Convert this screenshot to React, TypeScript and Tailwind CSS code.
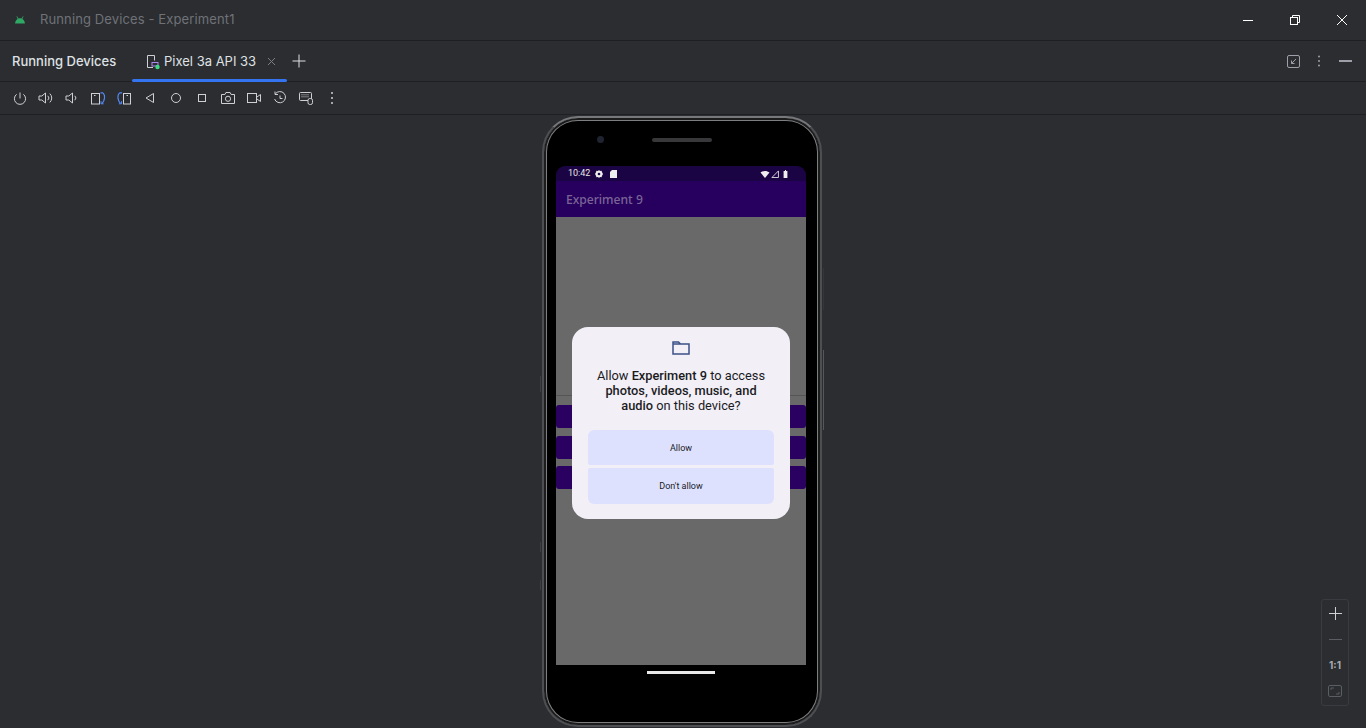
import React from "react";

const S = ({ children, w = 16, h = 16, c = "#ced0d6", vb }: { children: React.ReactNode; w?: number; h?: number; c?: string; vb?: string }) => (
  <svg width={w} height={h} viewBox={vb ?? `0 0 ${w} ${h}`} fill="none" stroke={c} strokeWidth="1" className="shrink-0">
    {children}
  </svg>
);

const Tool = ({ children, w = 26 }: { children: React.ReactNode; w?: number }) => (
  <div className="flex h-full shrink-0 items-center justify-center" style={{ width: w }}>
    {children}
  </div>
);

const toolIcons: React.ReactNode[] = [
  <S><path d="M8 2.5v6" /><path d="M4.6 4.3a5.6 5.6 0 1 0 6.8 0" /></S>,
  <S><path d="M1 6h2.8L7.5 3v10L3.8 10H1z" /><path d="M9.8 5.8a3 3 0 0 1 0 4.4" /><path d="M11.8 3.6a6 6 0 0 1 0 8.8" /></S>,
  <S><path d="M2 6h2.8L8.5 3v10L4.8 10H2z" /><path d="M10.8 5.8a3 3 0 0 1 0 4.4" /></S>,
  <S><rect x="1.5" y="3.5" width="8" height="10.5" /><path d="M4 5.5h1.5" /><path d="M10.5 2.8h2.5M13 2.8c2.5 2.5 2 7.5-1 10.7" stroke="#548af7" strokeWidth="1.2" /><path d="M11 11.2v2.6h2.6" stroke="#548af7" /></S>,
  <S><rect x="7.5" y="3.5" width="7" height="10.5" /><path d="M10.5 5.5h1.5" /><path d="M6 2.8H3.5M3.5 2.8c-2.5 2.5-2 7.5 1 10.7" stroke="#548af7" strokeWidth="1.2" /><path d="M5.5 11.2v2.6H2.9" stroke="#548af7" /></S>,
  <S><path d="M11.5 3.5v9L4 8z" /></S>,
  <S><circle cx="8" cy="8" r="4.5" /></S>,
  <S><rect x="4.5" y="4.5" width="7" height="7" /></S>,
  <S><path d="M1.5 4.5h3.4l1-2h4.2l1 2h3.4v9h-13z" /><circle cx="8" cy="8.8" r="2.6" /></S>,
  <S><rect x="1.5" y="3.5" width="9" height="9" /><path d="M10.5 7.3l4-2.8v7l-4-2.8" /></S>,
  <S><path d="M3.4 3.8A5.6 5.6 0 1 1 2.6 9" /><path d="M3 1.5v3h3" /><path d="M8 5.5V8.5h2.5" /></S>,
  <S><rect x="1.5" y="2.5" width="12" height="8" rx="1" /><path d="M3.5 4.8h8M3.5 6.8h8" strokeDasharray="1 1" /><rect x="10" y="8.5" width="4.5" height="6" rx="1.8" fill="#2b2d30" /></S>,
  <S><circle cx="8" cy="3" r="1" fill="#ced0d6" stroke="none" /><circle cx="8" cy="8" r="1" fill="#ced0d6" stroke="none" /><circle cx="8" cy="13" r="1" fill="#ced0d6" stroke="none" /></S>,
];

export default function App() {
  return (
    <div className="flex h-[728px] w-[1366px] flex-col overflow-hidden bg-[#2b2d30] font-['Inter','Liberation_Sans',sans-serif] text-[13px] text-[#dfe1e5]">
      {/* Title bar */}
      <div className="flex h-[41px] shrink-0 items-center border-b border-[#1e1f22]">
        <div className="ml-[13px] mr-[14px] flex w-[13px] justify-center">
          <svg width="12" height="8" viewBox="0 0 13 9" fill="#2fa866">
            <path d="M1 8.5C1 5.5 3.2 2.5 6.5 2.5S12 5.5 12 8.5z" />
            <path d="M3 .5l1.5 3M10 .5L8.5 3.5" stroke="#2fa866" strokeWidth="1" />
          </svg>
        </div>
        <span className="text-[13px] tracking-[0.12px] text-[#6f7278]">Running Devices - Experiment1</span>
        <div className="ml-auto flex h-full items-center">
          <div className="flex w-[47px] justify-center">
            <S w={12} h={12} c="#fff"><path d="M1 6.5h10" /></S>
          </div>
          <div className="flex w-[47px] justify-center">
            <S w={12} h={12} c="#fff"><rect x="1.5" y="3.5" width="7" height="7" /><path d="M3.5 3.5v-2h7v7h-2" /></S>
          </div>
          <div className="flex w-[48px] justify-center">
            <S w={12} h={12} c="#fff"><path d="M1 1l10 10M11 1L1 11" /></S>
          </div>
        </div>
      </div>
      {/* Tabs */}
      <div className="flex h-[41px] shrink-0 items-stretch border-b border-[#1e1f22]">
        <div className="ml-3 flex w-[120px] items-center pt-[1px] text-[13px] font-medium text-[#dfe1e5]">Running Devices</div>
        <div className="relative flex w-[155px] items-center pl-[14px] pt-[1px]">
          <svg width="14" height="16" viewBox="0 0 14 16" fill="none" className="mr-[4px] shrink-0">
            <path d="M7 13.5H1.5v-12h7v5" stroke="#ced0d6" />
            <rect x="6" y="8.5" width="6" height="3.5" stroke="#b189f5" />
            <circle cx="11.5" cy="13" r="2.2" fill="#3ddc84" />
          </svg>
          <span className="text-[#dfe1e5]">Pixel 3a API 33</span>
          <div className="ml-[11px]">
            <S w={9} h={9} c="#7a7e85"><path d="M1 1l7 7M8 1L1 8" /></S>
          </div>
          <div className="absolute bottom-[-1px] left-0 h-[3px] w-full rounded-sm bg-[#3574f0]" />
        </div>
        <div className="ml-[5px] flex items-center">
          <S w={14} h={14} c="#dfe1e5"><path d="M7 .5v13M.5 7h13" /></S>
        </div>
        <div className="ml-auto mr-[8px] flex items-center">
          <div className="flex w-[26px] justify-center">
            <S w={13} h={13} c="#9da0a8"><rect x=".5" y=".5" width="12" height="12" rx="1.5" /><path d="M9 4L4.5 8.5M4.5 5.5v3h3" /></S>
          </div>
          <div className="flex w-[26px] justify-center">
            <S w={4} h={14} c="#9da0a8"><circle cx="2" cy="2.5" r="1" fill="#9da0a8" stroke="none" /><circle cx="2" cy="7" r="1" fill="#9da0a8" stroke="none" /><circle cx="2" cy="11.5" r="1" fill="#9da0a8" stroke="none" /></S>
          </div>
          <div className="flex w-[26px] justify-center">
            <div className="h-[2px] w-[13px] bg-[#9da0a8]" />
          </div>
        </div>
      </div>
      {/* Toolbar */}
      <div className="flex h-[33px] shrink-0 items-center border-b border-[#1e1f22] pl-[7px]">
        {toolIcons.map((ic, i) => (
          <Tool key={i}>{ic}</Tool>
        ))}
      </div>
      {/* Canvas */}
      <div className="relative flex min-h-0 flex-1 justify-center overflow-hidden bg-[#2b2d30]">
        {/* Phone */}
        <div className="relative mr-[2px] mt-[1px] h-[611px] w-[280px] shrink-0 rounded-[36px] border-[2px] border-[#4d4f52] border-t-[#77787b] bg-black shadow-[inset_0_0_0_2px_#1c1c1d,inset_0_0_0_3px_#7d7e80]">
          <div className="absolute left-[53px] top-[18px] h-[7px] w-[7px] rounded-full bg-[#1f2430]" />
          <div className="absolute left-[108px] top-[20px] h-[4px] w-[60px] rounded-full bg-[#38383a]" />
          <div className="absolute right-[-4px] top-[232px] h-[80px] w-px bg-[#55575a]" />
          <div className="absolute right-[-4px] top-[150px] h-[42px] w-px bg-[#34363a]" />
          <div className="absolute left-[-4px] top-[258px] h-[16px] w-px bg-[#3d3f42]" />
          <div className="absolute left-[-4px] top-[424px] h-[10px] w-px bg-[#3d3f42]" />
          <div className="absolute left-[-4px] top-[462px] h-[10px] w-px bg-[#3d3f42]" />

          {/* Screen */}
          <div className="ml-[12px] mt-[48px] flex h-[499px] w-[250px] flex-col overflow-hidden rounded-t-[9px]">
            <div className="flex h-[15px] shrink-0 items-center bg-[#1b0443] pl-3 pr-[18px] pt-[1px] font-['Roboto','Liberation_Sans',sans-serif] text-[9px] text-[#e8e8e8]">
              <span>10:42</span>
              <svg width="8" height="8" viewBox="0 0 8 8" className="ml-[5px]" fill="#eee">
                <path d="M4 0l1 1 1.6-.2.4 1.5L8 4l-1 1.7-.4 1.5L5 7 4 8 3 7l-1.6.2L1 5.7 0 4l1-1.7.4-1.5L3 1z" />
                <circle cx="4" cy="4" r="1.3" fill="#1b0443" />
              </svg>
              <svg width="7" height="8" viewBox="0 0 7 8" className="ml-[7px]" fill="#eee">
                <path d="M2 0h5v8H0V2z" />
              </svg>
              <div className="ml-auto flex items-center gap-[1px]">
                <svg width="10" height="7" viewBox="0 0 9 7" fill="#eee"><path d="M0 1.6C2.6-.5 6.4-.5 9 1.6L4.5 7z" /></svg>
                <svg width="8" height="8" viewBox="0 0 7 7" fill="none" stroke="#ddd" strokeWidth="0.8"><path d="M6.5.8v5.8H.8z" /></svg>
                <svg width="5" height="8" viewBox="0 0 5 8" fill="#eee" className="ml-[3px]"><path d="M1 1h1V0h1v1h1.4v7H.6V1z" /></svg>
              </div>
            </div>
            <div className="flex h-[36px] shrink-0 items-center bg-[#27005f] pl-[10px] pt-[2px] font-['Noto_Sans','Liberation_Sans',sans-serif] text-[12.1px] font-medium text-[#7a6596]">
              Experiment 9
            </div>
            <div className="flex flex-1 flex-col bg-[#696969]">
              <div className="mt-[178px] h-px bg-[#555]" />
              <div className="mt-[9px] h-[23px] rounded-[3px] bg-[#2a0060]" />
              <div className="mt-[8px] h-[23px] rounded-[3px] bg-[#2a0060]" />
              <div className="mt-[7px] h-[23px] rounded-[3px] bg-[#2a0060]" />
            </div>
          </div>
          {/* Gesture bar */}
          <div className="ml-[103px] mt-[6px] h-[3px] w-[68px] bg-[#e8e8e8]" />

          {/* Dialog */}
          <div className="absolute left-[28px] top-[209px] flex h-[192px] w-[218px] flex-col items-center rounded-[16px] bg-[#f2eff6] px-4 pt-[14px] font-['Roboto','Liberation_Sans',sans-serif] text-[#1b1b1f]">
            <svg width="18" height="14" viewBox="0 0 18 14" fill="none" stroke="#3d5188" strokeWidth="1.5" className="shrink-0">
              <path d="M1 1h5.5l2 2H17v10H1zM1 3h8" />
            </svg>
            <div className="mt-[13px] w-full text-center text-[12.8px] leading-[15px]">
              Allow <b className="font-medium">Experiment 9</b> to access <b className="font-medium">photos, videos, music, and audio</b> on this device?
            </div>
            <div className="mt-[17px] flex h-[35px] w-full shrink-0 items-center justify-center rounded-t-[6px] rounded-b-[2px] bg-[#dde1fe] pt-[2px] text-[9px]">Allow</div>
            <div className="mt-[3px] flex h-[36px] w-full shrink-0 items-center justify-center rounded-t-[2px] rounded-b-[6px] bg-[#dde1fe] pt-[2px] text-[9px]">Don't allow</div>
          </div>
        </div>

        {/* Zoom panel */}
        <div className="absolute bottom-[22px] right-[17px] flex h-[107px] w-[28px] flex-col items-center rounded-[3px] border border-[#393b40] bg-[#2b2d30]">
          <div className="flex h-[26px] items-center justify-center">
            <S w={13} h={13} c="#ced0d6"><path d="M6.5 0v13M0 6.5h13" /></S>
          </div>
          <div className="flex h-[26px] items-center justify-center">
            <div className="h-px w-[13px] bg-[#5a5d63]" />
          </div>
          <div className="flex h-[26px] items-center justify-center text-[10px] font-bold text-[#a8abb0]">1:1</div>
          <div className="flex h-[26px] items-center justify-center">
            <S w={14} h={12} c="#5a5d63"><rect x=".5" y=".5" width="13" height="11" rx="1.5" /><path d="M3 5V3h3M11 7v2H8" /></S>
          </div>
        </div>
      </div>
    </div>
  );
}
